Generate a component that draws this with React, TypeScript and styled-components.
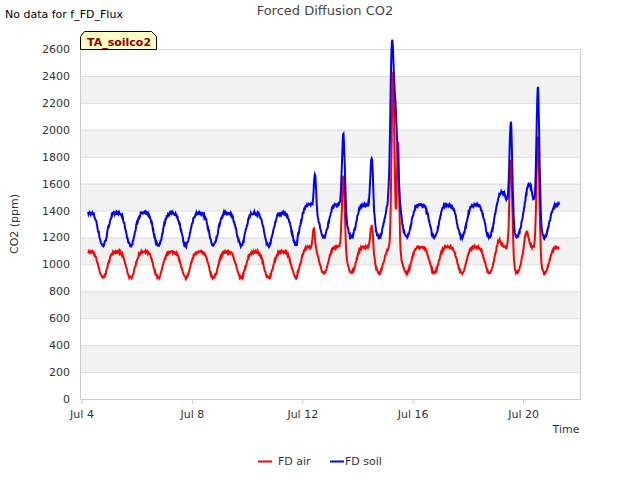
import React from 'react'
import styled, { createGlobalStyle } from 'styled-components'

const Global = createGlobalStyle`
  html, body { margin: 0; padding: 0; background: #fff; }
  body { font-family: "DejaVu Sans", sans-serif; }
`

const Page = styled.div`
  width: 640px;
  height: 480px;
  position: relative;
  overflow: hidden;
`

const Header = styled.div`
  display: flex;
  height: 24px;
  align-items: flex-start;
`

const NoData = styled.div`
  font-size: 11px;
  color: #000;
  padding: 8px 0 0 5px;
  width: 215px;
`

const Title = styled.div`
  font-size: 13px;
  color: #444;
  padding-top: 3px;
  width: 210px;
  text-align: center;
`

const Chart = styled.svg`
  position: absolute;
  left: 0;
  top: 0;
  font-family: "DejaVu Sans", sans-serif;
`

const X0 = 82
const DAY = 27.6
const yOf = (v: number) => 399 - (v / 2600) * 350

let seed = 7
const rnd = () => {
  seed = (seed * 16807) % 2147483647
  return seed / 2147483647 - 0.5
}

const g = (t: number, c: number, w: number, a: number) => a * Math.exp(-((t - c) ** 2) / (2 * w * w))

const series = () => {
  const red: string[] = []
  const blue: string[] = []
  for (let t = 0.22; t <= 17.3; t += 0.015) {
    const ph = Math.cos(2 * Math.PI * (t - 0.76))
    const shape = -ph * 0.8 - 0.2 * Math.cos(4 * Math.PI * (t - 0.76))
    const late = t > 7.8 ? 60 : 0
    let r = 1020 + 120 * shape + late * 0.6 + rnd() * 18
    let b = 1290 + 150 * shape + late + rnd() * 26
    r += g(t, 9.47, 0.05, 560) + g(t, 8.4, 0.04, 150) + g(t, 10.5, 0.05, 200)
    r += g(t, 11.27, 0.05, 1300) + g(t, 11.45, 0.04, 800) + g(t, 15.54, 0.05, 720) + g(t, 16.52, 0.05, 880)
    r += g(t, 15.1, 0.08, 60) + g(t, 16.1, 0.08, 120)
    b += g(t, 9.47, 0.05, 570) + g(t, 8.44, 0.04, 250) + g(t, 10.5, 0.05, 400)
    b += g(t, 11.22, 0.05, 700) + g(t, 11.32, 0.1, 800) + g(t, 15.54, 0.05, 700) + g(t, 16.52, 0.05, 950)
    b += g(t, 15.2, 0.15, 100) + g(t, 16.2, 0.1, 160)
    const x = (X0 + t * DAY).toFixed(1)
    red.push(`${x},${yOf(r).toFixed(1)}`)
    blue.push(`${x},${yOf(b).toFixed(1)}`)
  }
  return { red: red.join(' '), blue: blue.join(' ') }
}

const data = series()

const App: React.FC = () => {
  const ticks = Array.from({ length: 14 }, (_, i) => i * 200)
  return (
    <Page>
      <Global />
      <Header>
        <NoData>No data for f_FD_Flux</NoData>
        <Title>Forced Diffusion CO2</Title>
      </Header>
      <Chart width={640} height={480}>
        {ticks.slice(0, 13).map((v, i) =>
          i % 2 === 1 ? <rect key={v} x={80} y={yOf(v + 200)} width={500} height={350 / 13} fill="#f2f2f2" /> : null
        )}
        {ticks.map(v => (
          <g key={v}>
            <line x1={80} x2={580} y1={yOf(v) + 0.5} y2={yOf(v) + 0.5} stroke="#dcdcdc" />
            <text x={70} y={yOf(v) + 4} fontSize={11} fill="#333" textAnchor="end">{v}</text>
          </g>
        ))}
        <line x1={80.5} x2={80.5} y1={49} y2={400} stroke="#ccc" />
        <line x1={580.5} x2={580.5} y1={49} y2={400} stroke="#ccc" />
        <line x1={80} x2={581} y1={399.5} y2={399.5} stroke="#ccc" />
        {['Jul 4', 'Jul 8', 'Jul 12', 'Jul 16', 'Jul 20'].map((l, i) => (
          <g key={l}>
            <line x1={X0 + i * 4 * DAY} x2={X0 + i * 4 * DAY} y1={400} y2={404} stroke="#ccc" />
            <text x={X0 + i * 4 * DAY} y={418} fontSize={11} fill="#333" textAnchor="middle">{l}</text>
          </g>
        ))}
        <polyline points={data.red} fill="none" stroke="#ff0000" strokeWidth={2} />
        <polyline points={data.blue} fill="none" stroke="#0000ff" strokeWidth={2} />
        <text x={566} y={433} fontSize={11} fill="#333" textAnchor="middle">Time</text>
        <text transform="translate(18 224) rotate(-90)" fontSize={11} fill="#333" textAnchor="middle">CO2 (ppm)</text>
        <path d="M80.5 49.5 V36.5 L84.5 31.5 H151.5 L156.5 36.5 V49.5 Z" fill="#ffffc4" stroke="#000" />
        <text x={87} y={46} fontSize={11} fontWeight="bold" fill="#8b0000">TA_soilco2</text>
        <line x1={258} x2={272} y1={461.5} y2={461.5} stroke="#ff0000" strokeWidth={2} />
        <text x={278} y={465} fontSize={11} fill="#333">FD air</text>
        <line x1={330} x2={344} y1={461.5} y2={461.5} stroke="#0000ff" strokeWidth={2} />
        <text x={345} y={465} fontSize={11} fill="#333">FD soil</text>
      </Chart>
    </Page>
  )
}

export default App
